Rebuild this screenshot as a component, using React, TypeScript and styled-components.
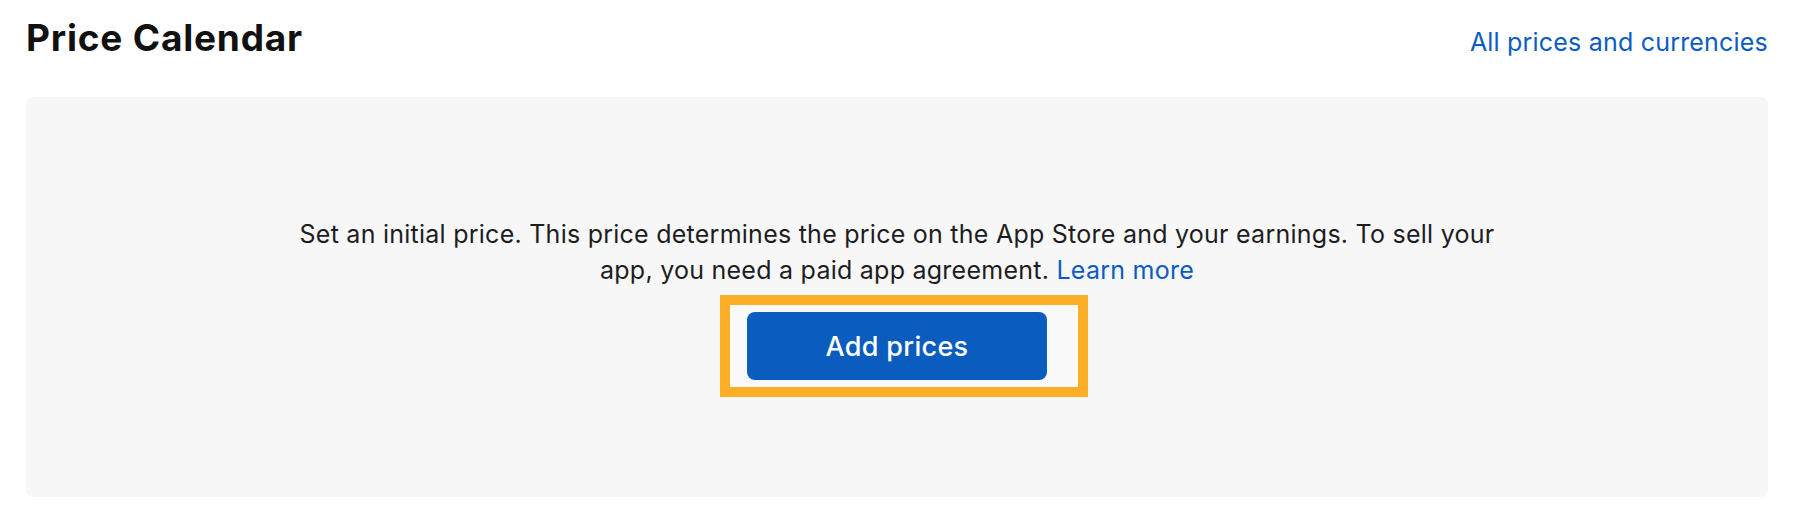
import React from "react";
import styled, { createGlobalStyle } from "styled-components";

const GlobalStyle = createGlobalStyle`
  html, body {
    margin: 0;
    padding: 0;
    background: #ffffff;
  }
  body {
    font-family: Inter, "Noto Sans", "Liberation Sans", sans-serif;
    color: #1d1d1f;
  }
`;

const Page = styled.div`
  width: 1802px;
  box-sizing: border-box;
  padding: 0 34px 0 26px;
`;

const Header = styled.div`
  display: flex;
  justify-content: space-between;
  align-items: flex-start;
  height: 97px;
`;

const Title = styled.h2`
  margin: 16px 0 0;
  font-size: 37px;
  font-weight: 700;
  letter-spacing: 0.8px;
  line-height: 44px;
  color: #111111;
`;

const HeaderLink = styled.a`
  margin-top: 27px;
  font-size: 25px;
  letter-spacing: 0.2px;
  line-height: 30px;
  color: #0b5cc2;
  text-decoration: none;
  cursor: pointer;
`;

const Panel = styled.section`
  background: #f7f7f7;
  border-radius: 8px;
  height: 400px;
  box-sizing: border-box;
  padding-top: 119px;
  display: flex;
  flex-direction: column;
  align-items: center;
`;

const Message = styled.p`
  margin: 0;
  max-width: 1230px;
  text-align: center;
  font-size: 25px;
  letter-spacing: 0.25px;
  line-height: 36px;
  color: #1d1d1f;
`;

const InlineLink = styled.a`
  color: #0b5cc2;
  text-decoration: none;
  cursor: pointer;
`;

const Highlight = styled.div`
  margin: 7px 0 0 14px;
  border: 10px solid #fbae26;
  padding: 7px 31px 7px 17px;
  display: flex;
  background: #f9f9f9;
`;

const PrimaryButton = styled.button`
  width: 300px;
  height: 68px;
  border: none;
  border-radius: 8px;
  background: #0b5cbf;
  color: #ffffff;
  font-family: inherit;
  font-size: 27px;
  font-weight: 500;
  letter-spacing: 0.3px;
  cursor: pointer;
`;

export default function App() {
  return (
    <>
      <GlobalStyle />
      <Page>
        <Header>
          <Title>Price Calendar</Title>
          <HeaderLink>All prices and currencies</HeaderLink>
        </Header>
        <Panel>
          <Message>
            Set an initial price. This price determines the price on the App
            Store and your earnings. To sell your app, you need a paid app
            agreement. <InlineLink>Learn more</InlineLink>
          </Message>
          <Highlight>
            <PrimaryButton>Add prices</PrimaryButton>
          </Highlight>
        </Panel>
      </Page>
    </>
  );
}
